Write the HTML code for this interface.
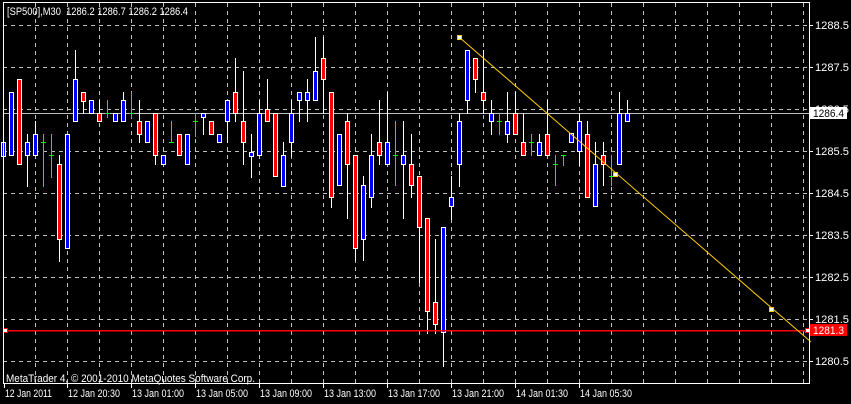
<!DOCTYPE html>
<html><head><meta charset="utf-8"><style>
html,body{margin:0;padding:0;background:#000;width:851px;height:404px;overflow:hidden}
svg{display:block}
text{font-family:"Liberation Sans",sans-serif;font-size:11px;fill:#fff}
</style></head><body>
<svg id="s" width="851" height="404" xmlns="http://www.w3.org/2000/svg" shape-rendering="crispEdges">
<rect width="851" height="404" fill="#000"/>
<g id="grid" stroke="#c0c0c0" stroke-width="1" stroke-dasharray="4,4"></g>
<line x1="3" y1="113.5" x2="809" y2="113.5" stroke="#c0c0c0"/>
<g id="c"></g>
<line x1="4" y1="330.5" x2="809" y2="330.5" stroke="#ff0000" stroke-width="1.5"/>
<rect x="3.5" y="328.5" width="4" height="4" fill="#fff" stroke="#f00"/>
<rect x="805.5" y="328.5" width="4" height="4" fill="#fff" stroke="#f00"/>
<line x1="459" y1="37" x2="811" y2="342" stroke="#ffcc00" stroke-width="1" shape-rendering="auto"/>
<rect x="457.5" y="35.5" width="4" height="4" fill="#fff" stroke="#ffcc00"/>
<rect x="613.5" y="172.5" width="4" height="4" fill="#fff" stroke="#ffcc00"/>
<rect x="769.5" y="307.5" width="4" height="4" fill="#fff" stroke="#ffcc00"/>
<rect x="3.5" y="2.5" width="806" height="381" fill="none" stroke="#fff"/>
<text x="7" y="15" textLength="181" lengthAdjust="spacingAndGlyphs" xml:space="preserve">[SP500],M30  1286.2 1286.7 1286.2 1286.4</text>
<text x="6" y="382" textLength="249" lengthAdjust="spacingAndGlyphs">MetaTrader 4, © 2001-2010 MetaQuotes Software Corp.</text>
<g id="p"></g>
<rect x="810" y="107" width="37" height="12" fill="#fff"/>
<text x="813" y="117" style="fill:#000" textLength="31" lengthAdjust="spacingAndGlyphs">1286.4</text>
<rect x="810" y="324" width="37" height="12" fill="#f00"/>
<text x="813" y="334" style="fill:#fff" textLength="31" lengthAdjust="spacingAndGlyphs">1281.3</text>
<g id="t"></g>
</svg>
<script>
var NS="http://www.w3.org/2000/svg";
function el(p,n,a,txt){var e=document.createElementNS(NS,n);for(var k in a)e.setAttribute(k,a[k]);if(txt)e.textContent=txt;document.getElementById(p).appendChild(e);return e;}
for(var x=35;x<=803;x+=32)el('grid','line',{x1:x+.5,y1:3,x2:x+.5,y2:383});
var ys=[25,67,109,151,193,235,277,319,361],lb=["1288.5","1287.5","1286.5","1285.5","1284.5","1283.5","1282.5","1281.5","1280.5"];
ys.forEach(function(y,i){el('grid','line',{x1:3,y1:y+.5,x2:809,y2:y+.5});el('p','line',{x1:809,y1:y+.5,x2:813,y2:y+.5,stroke:'#fff'});el('p','text',{x:815,y:y+4,textLength:34,lengthAdjust:'spacingAndGlyphs'},lb[i]);});
var tl=[[4,"12 Jan 2011"],[67,"12 Jan 20:30"],[131,"13 Jan 01:00"],[195,"13 Jan 05:00"],[259,"13 Jan 09:00"],[323,"13 Jan 13:00"],[387,"13 Jan 17:00"],[451,"13 Jan 21:00"],[515,"14 Jan 01:30"],[579,"14 Jan 05:30"]];
tl.forEach(function(t,i){el('t','line',{x1:t[0]+.5,y1:383,x2:t[0]+.5,y2:388,stroke:'#fff'});el('t','text',{x:t[0]+1,y:397,textLength:i==0?47:52,lengthAdjust:'spacingAndGlyphs'},t[1]);});
var d=[
[3.5,'b',142,156,113,160],
[11.5,'b',92,155],[19.5,'r',79,164],[27.5,'b',142,155,134,186],[35.5,'b',134,155,121,155],
[43.5,'g',142,142,134,186],[51.5,'g',155,155,134,177],[59.5,'r',164,239,155,261],[67.5,'b',134,248,134,248],
[75.5,'b',79,121,50,121],[83.5,'r',92,101,92,113],[91.5,'b',100,113],[99.5,'r',113,121,100,121],
[107.5,'g',113,113,100,117],[115.5,'b',113,121],[123.5,'b',100,121,92,121],[131.5,'g',113,113,92,117],
[139.5,'r',121,134,100,142],[147.5,'b',121,142],[155.5,'r',113,155,113,164],[163.5,'b',155,164,155,164],
[171.5,'g',142,142,121,142],[179.5,'r',134,155],[187.5,'b',134,164],[195.5,'g',121,121,113,136],
[203.5,'b',113,117,113,134],[211.5,'r',121,134],[219.5,'b',134,142],[227.5,'b',100,121,100,142],
[235.5,'r',92,113,58,121],[243.5,'r',121,142,71,164],[251.5,'b',152,156,134,177],[259.5,'b',113,155,100,155],
[267.5,'r',109,121,79,121],[275.5,'r',113,176,113,176],[283.5,'b',155,186,142,186],[291.5,'b',113,142,100,156],
[299.5,'b',92,100,92,121],[307.5,'b',92,100,79,121],[315.5,'b',71,100,37,100],[323.5,'r',58,79,37,113],
[331.5,'r',92,197,92,207],[339.5,'b',134,185],[347.5,'r',121,164,113,218],[355.5,'r',155,248,155,260],
[363.5,'b',185,239,176,260],[371.5,'b',155,197,134,207],[379.5,'r',142,155,100,164],[387.5,'b',142,164,92,164],
[395.5,'g',155,155,121,185],[403.5,'b',155,164,121,218],[411.5,'r',164,185,134,197],[419.5,'r',176,227,176,282],
[427.5,'r',218,311,218,333],[435.5,'r',302,324,239,333],[443.5,'b',227,332,227,366],[451.5,'b',197,206,176,219],
[459.5,'b',121,164,113,186],[467.5,'b',50,100,50,113],[475.5,'r',58,79,58,92],[483.5,'r',92,100,50,113],
[491.5,'b',113,121,100,134],[499.5,'g',121,121,113,134],[507.5,'b',121,134,92,142],[515.5,'r',113,134,92,134],
[523.5,'r',142,155,113,155],[531.5,'g',142,142,134,155],[539.5,'b',142,155,134,155],[547.5,'r',134,155,100,155],
[555.5,'g',164,164,155,185],[563.5,'g',155,155,155,165],[571.5,'b',133,142,133,142],[579.5,'b',121,151,113,165],
[587.5,'r',134,197,121,197],[595.5,'b',164,206,142,206],[603.5,'r',155,164,142,185],[611.5,'g',176,176,155,185],
[619.5,'b',113,164,92,164],[627.5,'b',113,121,100,121]
];
d.forEach(function(c){
var cx=c[0],t=c[1],a=c[2],b=c[3],wt=c[4]===undefined?a:c[4],wb=c[5]===undefined?b:c[5];
if(t=='g'){el('c','rect',{x:cx-.5,y:wt,width:1,height:wb-wt+1,fill:'#00ff00'});el('c','rect',{x:cx-2.5,y:a,width:5,height:1,fill:'#00ff00'});return;}
el('c','rect',{x:cx-.5,y:wt,width:1,height:wb-wt+1,fill:'#fff'});
el('c','rect',{x:cx-2,y:a+.5,width:4,height:Math.max(b-a,1),fill:t=='b'?'#0000ff':'#ff0000',stroke:'#fff','stroke-width':1});
});
</script>
</body></html>
